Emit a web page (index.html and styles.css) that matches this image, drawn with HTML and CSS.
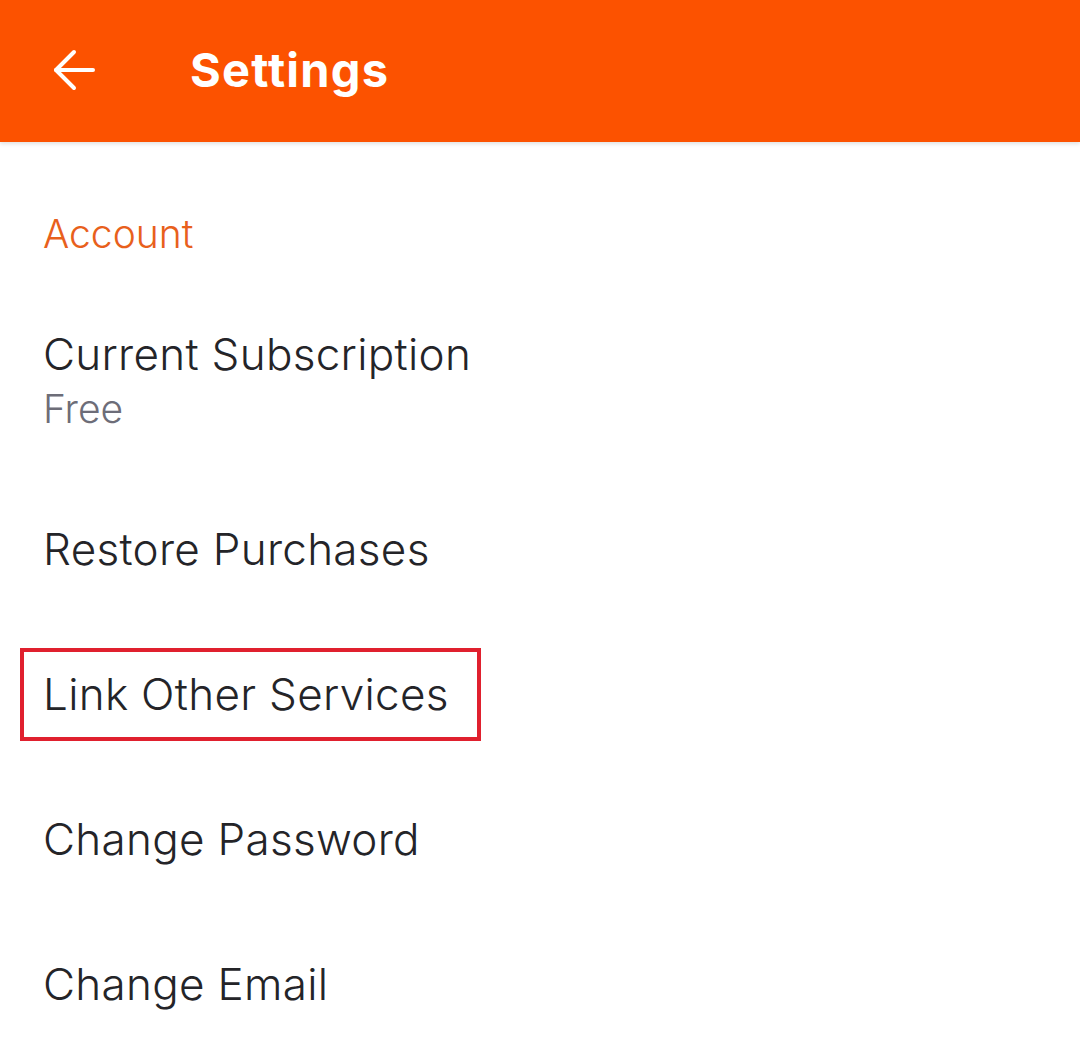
FILE: index.html
```html
<!DOCTYPE html>
<html lang="en">
<head>
    <meta charset="UTF-8">
    <meta name="viewport" content="width=device-width, initial-scale=1.0">
    <title>Settings</title>
    <link rel="stylesheet" href="styles.css">
</head>
<body>
    <header class="app-bar">
        <button class="back-btn" aria-label="Back">
            <svg width="42" height="42" viewBox="0 0 42 42" fill="none" stroke="#fff" stroke-width="4" stroke-linecap="round" stroke-linejoin="round">
                <path d="M40 21H3"/>
                <path d="M21 3L3 21l18 18"/>
            </svg>
        </button>
        <h1 class="title">Settings</h1>
    </header>

    <main class="settings">
        <h2 class="section-title">Account</h2>
        <div class="row">
            <div class="row-label">Current Subscription</div>
            <div class="row-value">Free</div>
        </div>
        <div class="row">
            <div class="row-label">Restore Purchases</div>
        </div>
        <div class="row">
            <div class="row-label"><span class="highlight">Link Other Services</span></div>
        </div>
        <div class="row">
            <div class="row-label">Change Password</div>
        </div>
        <div class="row">
            <div class="row-label">Change Email</div>
        </div>
    </main>
</body>
</html>
```

FILE: styles.css
```css
html, body {
    margin: 0;
    padding: 0;
    background: #fff;
    font-family: Inter, "Noto Sans", Arial, sans-serif;
    color: #242428;
    overflow: hidden;
}
.app-bar {
    height: 142px;
    background-color: #fc5200;
    display: flex;
    align-items: center;
    padding-left: 53px;
    box-sizing: border-box;
    box-shadow: 0 2px 4px rgba(0,0,0,0.12);
    position: relative;
}
.back-btn {
    background: none;
    border: none;
    padding: 0;
    width: 42px;
    height: 42px;
    margin-bottom: 2px;
    display: flex;
}
.title {
    margin: 0 0 4px 95px;
    color: #fff;
    font-size: 47px;
    font-weight: 700;
    letter-spacing: 1.2px;
}
.settings {
    padding: 69px 43px 0;
}
.section-title {
    margin: 0 0 26px;
    font-size: 39px;
    line-height: 45px;
    font-weight: 350;
    color: #e8601c;
}
.row {
    padding: 44px 0;
}
.row-label {
    font-size: 44px;
    line-height: 57px;
    font-weight: 350;
    letter-spacing: 0.3px;
}
.row-value {
    margin-top: 2px;
    font-size: 39px;
    line-height: 48px;
    font-weight: 350;
    color: #6d6d78;
}
.highlight {
    display: inline-block;
    border: 4px solid #e0202e;
    padding: 14px 28px 14px 19px;
    margin: -18px 0 -18px -23px;
}
```
